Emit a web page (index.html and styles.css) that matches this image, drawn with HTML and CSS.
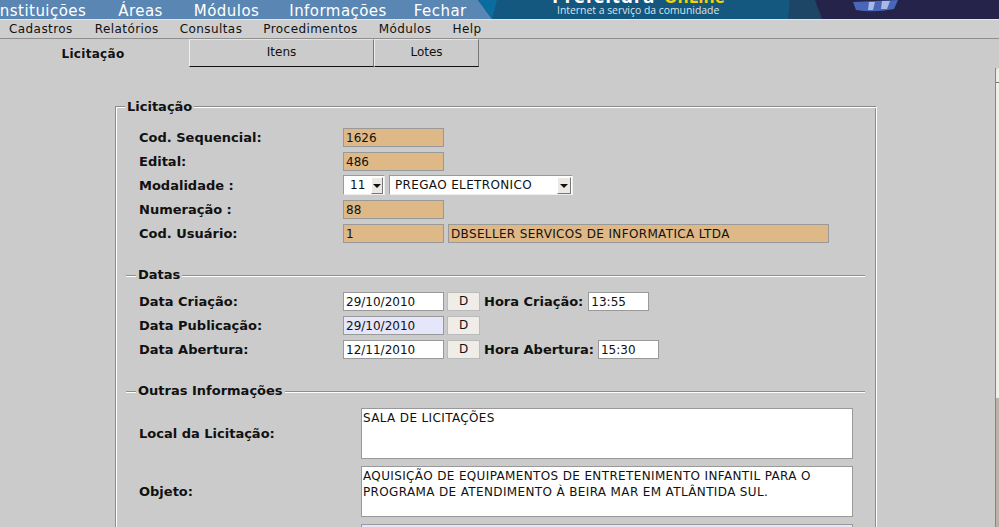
FILE: index.html
```html
<!DOCTYPE html>
<html lang="pt">
<head>
<meta charset="utf-8">
<title>Licitação</title>
<link rel="stylesheet" href="styles.css">
</head>
<body>
<header class="top">
  <nav class="top-nav">
    <a class="n1">Instituições</a><a class="n2">Áreas</a><a class="n3">Módulos</a><a class="n4">Informações</a><a>Fechar</a>
  </nav>
  <svg class="banner" width="521" height="19" viewBox="0 0 521 19" aria-label="Prefeitura OnLine">
    <rect width="521" height="19" fill="#14577f"/>
    <polygon points="0,0 14,19 0,19" fill="#5a86b4"/>
    <polygon points="0,0 19,0 14,19" fill="#0a6c9f"/>
    <polygon points="312,0 338,0 344,19 310,19" fill="#1d4565"/>
    <polygon points="337,0 521,0 521,19 344,19" fill="#25234a"/>
    <path d="M375 2 L420 0 L416 9 Q396 13 378 10 Z" fill="#4a66b8"/>
    <path d="M391 2 l6 0 l-2 8 l-5 0 Z M404 1 l8 0 l-3 8 l-6 0 Z" fill="#a9b9e6"/>
    <text class="b-title" x="74" y="3">Prefeitura</text>
    <text class="b-title b-yellow" x="186" y="3">OnLine</text>
    <text class="b-sub" x="79" y="14">Internet a serviço da comunidade</text>
  </svg>
</header>
<nav class="menu">
  <a>Cadastros</a><a>Relatórios</a><a>Consultas</a><a>Procedimentos</a><a>Módulos</a><a>Help</a>
</nav>
<div class="tabs">
  <a class="tab tab-active">Licitação</a>
  <a class="tab tab-itens">Itens</a>
  <a class="tab tab-lotes">Lotes</a>
</div>
<div class="side-edge"><i class="e1"></i><i class="e2"></i><i class="e3"></i><i class="e4"></i></div>
<main class="content">
  <fieldset class="box">
    <legend>Licitação</legend>
    <div class="rows">
      <label>Cod. Sequencial:</label>
      <div class="line"><input class="f w100 ro" value="1626" readonly></div>
      <label>Edital:</label>
      <div class="line"><input class="f w100 ro" value="486" readonly></div>
      <label>Modalidade :</label>
      <div class="line">
        <div class="sel s-code"><span>11</span><i class="arrow"></i></div>
        <div class="sel s-name"><span class="caps">PREGAO ELETRONICO</span><i class="arrow"></i></div>
      </div>
      <label>Numeração :</label>
      <div class="line"><input class="f w100 ro" value="88" readonly></div>
      <label>Cod. Usuário:</label>
      <div class="line"><input class="f w100 ro" value="1" readonly><input class="f w381 ro caps" value="DBSELLER SERVICOS DE INFORMATICA LTDA" readonly></div>
    </div>
    <fieldset class="sub sub-datas">
      <legend>Datas</legend>
      <div class="rows">
        <label>Data Criação:</label>
        <div class="line"><input class="f w100" value="29/10/2010"><button class="d">D</button><b class="inl inl-c">Hora Criação:</b><input class="f w60" value="13:55"></div>
        <label>Data Publicação:</label>
        <div class="line"><input class="f w100 lav" value="29/10/2010"><button class="d">D</button></div>
        <label>Data Abertura:</label>
        <div class="line"><input class="f w100" value="12/11/2010"><button class="d">D</button><b class="inl">Hora Abertura:</b><input class="f w60" value="15:30"></div>
      </div>
    </fieldset>
    <fieldset class="sub sub-outras">
      <legend>Outras Informações</legend>
      <div class="area-row"><label>Local da Licitação:</label><textarea class="ta" readonly>SALA DE LICITAÇÕES</textarea></div>
      <div class="area-row"><label>Objeto:</label><textarea class="ta" readonly>AQUISIÇÃO DE EQUIPAMENTOS DE ENTRETENIMENTO INFANTIL PARA O PROGRAMA DE ATENDIMENTO À BEIRA MAR EM ATLÂNTIDA SUL.</textarea></div>
      <div class="area-row"><label></label><textarea class="ta lav" readonly></textarea></div>
    </fieldset>
  </fieldset>
</main>
</body>
</html>
```

FILE: styles.css
```css
* { box-sizing: border-box; }
html, body { height: 100%; }
body {
  margin: 0;
  overflow: hidden;
  background: #cbcbcb;
  color: #111;
  font: 13px "DejaVu Sans", sans-serif;
  position: relative;
}
a { display: block; }

.top { display: flex; height: 19px; background: #5a86b4; }
.top-nav {
  width: 478px;
  flex: none;
  display: flex;
  margin-left: -5px;
  margin-right: 5px;
  color: #fff;
  font-size: 15px;
  line-height: 22px;
  height: 19px;
  overflow: hidden;
  letter-spacing: .45px;
}
.n1 { margin-right: 32px; }
.n2 { margin-right: 31px; }
.n3 { margin-right: 30px; }
.n4 { margin-right: 27px; }
.banner { display: block; flex: none; }
.b-title { font: bold 19px "Open Sans", sans-serif; fill: #fff; letter-spacing: .6px; }
.b-yellow { fill: #f4d20a; letter-spacing: 0; font-size: 17px; }
.b-sub { font: 10.4px "Open Sans", sans-serif; fill: #dde3ea; }

.menu {
  display: flex;
  height: 20px;
  padding-left: 9px;
  background: #cecece;
  border-top: 1px solid #dfe6ea;
  border-bottom: 1px solid #8f8f8f;
  font-size: 12px;
  line-height: 18px;
  letter-spacing: .42px;
  gap: 21px;
}
.menu a:first-child { margin-right: 1px; }

.tabs { display: flex; height: 29px; font-size: 12px; }
.tab { text-align: center; }
.tab-active { width: 189px; font-weight: bold; line-height: 31px; padding-right: 3px; letter-spacing: .3px; }
.tab-itens, .tab-lotes {
  border-top: 1px solid #e4e4e4;
  border-left: 1px solid #efefef;
  border-right: 1px solid #777;
  border-bottom: 1px solid #111;
  height: 28px;
  line-height: 25px;
}
.tab-itens { width: 185px; }
.tab-lotes { width: 105px; }

.side-edge {
  position: absolute;
  top: 68px;
  right: 0;
  width: 4px;
  bottom: 0;
  display: flex;
  flex-direction: column;
  border-left: 1px solid #8d8479;
}
.side-edge i { display: block; }
.e1 { height: 14px; background: #f1ece4; border-top-left-radius: 3px; }
.e2 { height: 1px; background: #7a7168; }
.e3 { height: 315px; background: #f2eee8; }
.e4 { flex: 1; background: #bcb1a6; }

.content { padding: 30px 0 0 115px; }
.box {
  width: 762px;
  margin: 0;
  padding: 11px 11px 0 10px;
  height: 600px;
  min-width: 0;
  border: 1px solid;
  border-color: #8b8b8b #fff #fff #8b8b8b;
  box-shadow: inset 1px 1px 0 #fff, inset -1px -1px 0 #8b8b8b;
}
legend {
  padding: 0 2px;
  background: #cbcbcb;
  font-weight: bold;
  line-height: 14px;
}
.box > legend { margin-left: -1px; padding-top: 2px; }

.rows {
  display: grid;
  grid-template-columns: 204px 1fr;
  grid-auto-rows: 24px;
  padding-left: 13px;
  align-items: center;
}
label { font-weight: bold; display: block; }
.line { display: flex; align-items: center; gap: 4px; }

.f {
  height: 19px;
  border: 1px solid #999;
  background: #fff;
  color: #111;
  font: 12px "DejaVu Sans", sans-serif;
  padding: 1px 1px 0 2px;
  margin: 0;
  outline: 0;
  border-radius: 0;
}
.ro { background: #deb887; }
.lav { background: #e6e6fa; }
.caps { letter-spacing: .35px; }
.w100 { width: 101px; }
.w381 { width: 381px; }
.w60 { width: 61px; }

.sel {
  display: flex;
  height: 20px;
  align-items: center;
  background: #fff;
  border: 1px solid;
  border-color: #999 #eee #eee #999;
  font: 12px "DejaVu Sans", sans-serif;
  justify-content: space-between;
}
.s-code { width: 42px; padding-left: 6px; padding-right: 1px; }
.s-name { width: 184px; padding-left: 5px; padding-right: 1px; }
.arrow {
  height: 17px;
  position: relative;
  background: #ece9e4;
  border: 1px solid;
  border-color: #fff #777 #777 #fff;
  flex: none;
}
.s-code .arrow { width: 12px; }
.s-name .arrow { width: 14px; }
.arrow::after {
  content: "";
  position: absolute;
  left: 50%;
  margin-left: -4px;
  top: 6px;
  border: 4px solid transparent;
  border-top-color: #111;
  border-bottom: 0;
}

.sub {
  margin: 0;
  padding: 0;
  min-width: 0;
  border: 0;
  border-top: 1px solid #8f8f8f;
  box-shadow: inset 0 1px 0 #fff;
  width: 739px;
}
.sub > legend { margin-left: 10px; }
.sub-datas { margin-top: 23px; padding-top: 7px; height: 116px; }
.sub-outras { padding-top: 10px; }
.d {
  width: 33px;
  height: 19px;
  margin-left: -1px;
  background: #f0ede8;
  border: 1px solid #bbb;
  font: 12px "DejaVu Sans", sans-serif;
  color: #111;
  padding: 0;
}
.inl { font-size: 13px; }
.inl-c { margin-right: 1px; }

.area-row {
  display: grid;
  grid-template-columns: 222px 492px;
  padding-left: 13px;
  align-items: center;
  margin-bottom: 7px;
}
.ta {
  height: 51px;
  display: block;
  resize: none;
  overflow: hidden;
  border: 1px solid #999;
  background: #fff;
  color: #111;
  font: 12px/16px "DejaVu Sans", sans-serif;
  letter-spacing: .36px;
  padding: 1px;
  margin: 0;
  outline: 0;
  border-radius: 0;
}
.ta.lav { background: #e6e6fa; }
```
